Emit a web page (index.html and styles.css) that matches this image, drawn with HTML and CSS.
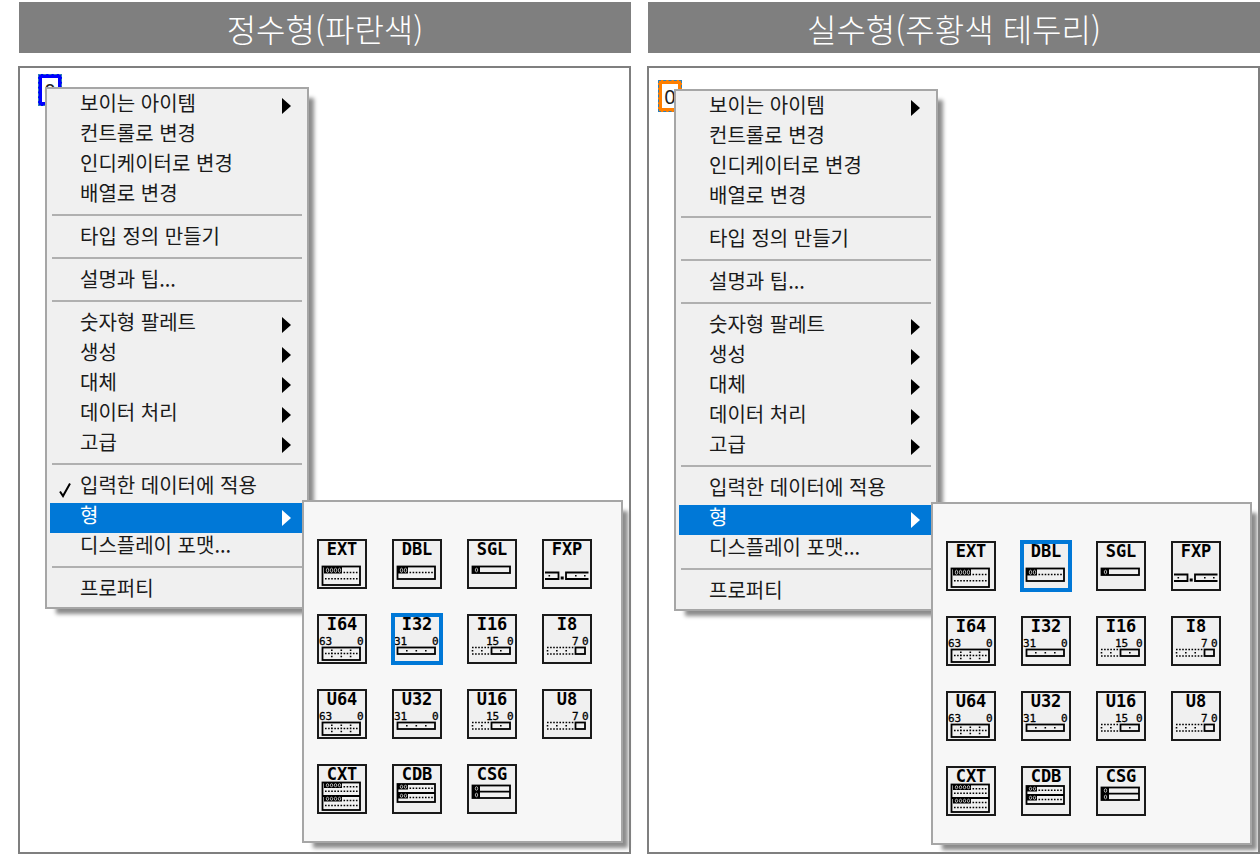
FILE: index.html
```html
<!DOCTYPE html>
<html lang="ko">
  <head>
    <meta charset="UTF-8" />
    <meta name="viewport" content="width=device-width, initial-scale=1.0" />
    <title>정수형 / 실수형</title>
    <link rel="stylesheet" href="styles.css">
  </head>
  <body>
    <section class="column">
      <h2 class="title">정수형(파란색)</h2>
      <div class="panel">
        <input class="constant integer" type="text" value="0" aria-label="정수형" />
        <ul class="menu menu-integer">
          <li><button class="item more">보이는 아이템</button></li>
          <li><button class="item">컨트롤로 변경</button></li>
          <li><button class="item">인디케이터로 변경</button></li>
          <li><button class="item">배열로 변경</button></li>
          <li class="line"></li>
          <li><button class="item">타입 정의 만들기</button></li>
          <li class="line"></li>
          <li><button class="item">설명과 팁...</button></li>
          <li class="line"></li>
          <li><button class="item more">숫자형 팔레트</button></li>
          <li><button class="item more">생성</button></li>
          <li><button class="item more">대체</button></li>
          <li><button class="item more">데이터 처리</button></li>
          <li><button class="item more">고급</button></li>
          <li class="line"></li>
          <li>
            <button class="item">
              <svg class="check" viewBox="0 0 12 16"><path d="M1 9.5 L4 14 L11 1.5" /></svg>입력한 데이터에 적용
            </button>
          </li>
          <li class="parent">
            <button class="item more active">형</button>
            <div class="palette" data-selected="I32"></div>
          </li>
          <li><button class="item">디스플레이 포맷...</button></li>
          <li class="line"></li>
          <li><button class="item">프로퍼티</button></li>
        </ul>
      </div>
    </section>

    <section class="column">
      <h2 class="title">실수형(주황색 테두리)</h2>
      <div class="panel">
        <input class="constant real" type="text" value="0" aria-label="실수형" />
        <ul class="menu menu-real">
          <li><button class="item more">보이는 아이템</button></li>
          <li><button class="item">컨트롤로 변경</button></li>
          <li><button class="item">인디케이터로 변경</button></li>
          <li><button class="item">배열로 변경</button></li>
          <li class="line"></li>
          <li><button class="item">타입 정의 만들기</button></li>
          <li class="line"></li>
          <li><button class="item">설명과 팁...</button></li>
          <li class="line"></li>
          <li><button class="item more">숫자형 팔레트</button></li>
          <li><button class="item more">생성</button></li>
          <li><button class="item more">대체</button></li>
          <li><button class="item more">데이터 처리</button></li>
          <li><button class="item more">고급</button></li>
          <li class="line"></li>
          <li><button class="item">입력한 데이터에 적용</button></li>
          <li class="parent">
            <button class="item more active">형</button>
            <div class="palette" data-selected="DBL"></div>
          </li>
          <li><button class="item">디스플레이 포맷...</button></li>
          <li class="line"></li>
          <li><button class="item">프로퍼티</button></li>
        </ul>
      </div>
    </section>

    <script>
      function box(x, y, w, h) {
        return `<rect class="box" x="${x}" y="${y}" width="${w}" height="${h}" />`;
      }

      function dots(d) {
        return `<path class="dots" d="${d}" />`;
      }

      // exponent part of a float: black block with small light rings
      function exponent(x, y, w, h, rings) {
        var out = `<rect x="${x}" y="${y}" width="${w}" height="${h}" />`;
        for (var i = 0; i < rings; i++) {
          out += `<ellipse class="ring" cx="${x + 3.5 + i * 4}" cy="${y + h / 2}" rx="1.2" ry="${h / 2 - 1.2}" />`;
        }
        return out;
      }

      function bits(hi, x) {
        return `<text class="bits" x="${x}" y="31">${hi}</text><text class="bits" x="40" y="31">0</text>`;
      }

      var int64 = bits("63", 2) + box(5.5, 33.5, 37.5, 12.5) +
        dots("M8 39.5H42M14.8 35.5V44M24.3 35.5V44M33.6 35.5V44");
      var int32 = bits("31", 2) + box(5.5, 33.5, 37.5, 6.5) +
        dots("M14 36.7h1.6M23.5 36.7h1.6M33 36.7h1.6");
      var int16 = bits("15", 19) + box(24.5, 33.5, 18.5, 6.5) +
        dots("M5 33.5H23M5 40H23M5.5 36v2M14.8 36v2M33 36.7h1.6");
      var int8 = bits("7", 30) + box(33.5, 33.5, 9.5, 6.5) +
        dots("M5 33.5H32M5 40H32M5.5 36v2M14.8 36v2M24.2 36v2");

      var types = [
        ["EXT", box(5.5, 27.5, 37.5, 18.5) + exponent(7, 28, 18, 6.5, 4) + dots("M26.5 33.5H42M8 39.7H42")],
        ["DBL", box(5.5, 27.5, 37.5, 12.5) + exponent(6, 28, 10, 6.5, 2) + dots("M17.5 33.5H42")],
        ["SGL", box(5.5, 27.5, 37.5, 6.5) + exponent(6, 28, 7, 6, 1)],
        ["FXP", '<path class="box" d="M3 33.5H16.5V40H3M46.5 33.5H24V40H46.5" /><rect x="18.7" y="37.5" width="3" height="3" />' +
          dots("M6.5 36.7h1.6M33 36.7h1.6M42 36.7h1.6")],
        ["I64", int64],
        ["I32", int32],
        ["I16", int16],
        ["I8", int8],
        ["U64", int64],
        ["U32", int32],
        ["U16", int16],
        ["U8", int8],
        ["CXT", box(5.5, 18.5, 37.5, 27.5) + '<path class="box" d="M5.5 32H43" />' +
          exponent(7, 18.5, 18, 5.5, 4) + exponent(7, 32, 18, 5.5, 4) +
          dots("M26.5 22.8H42M8 27.2H42M26.5 36.5H42M8 41.5H42")],
        ["CDB", box(5.5, 20, 37.5, 18) + '<path class="box" d="M5.5 29H43" />' +
          exponent(6, 20, 10, 5.5, 2) + exponent(6, 29, 10, 5.5, 2) + dots("M17.5 24.3H42M17.5 33.5H42")],
        ["CSG", box(5.5, 21.5, 37.5, 12.5) + '<path class="box" d="M5.5 27.7H43" />' +
          exponent(6, 21.5, 7, 6, 1) + exponent(6, 28, 7, 6, 1)]
      ];

      var palettes = document.querySelectorAll(".palette");
      for (var p = 0; p < palettes.length; p++) {
        for (var i = 0; i < types.length; i++) {
          var tile = document.createElement("button");
          tile.className = "tile";
          if (types[i][0] === palettes[p].dataset.selected) {
            tile.classList.add("selected");
          }
          tile.innerHTML = `<svg viewBox="0 0 50 50"><rect class="frame" x="1" y="1" width="48" height="48" />
            <text class="name" x="25" y="16">${types[i][0]}</text>${types[i][1]}</svg>`;
          palettes[p].appendChild(tile);
        }
      }
    </script>
  </body>
</html>
```
FILE: styles.css
```css
* {
  margin: 0;
  padding: 0;
  box-sizing: border-box;
}

body {
  display: flex;
  gap: 16px;
  min-height: 100vh;
  padding: 2px 0 0 18px;
  background: #fff;
  font-family: "Noto Sans CJK KR", sans-serif;
}

.column {
  flex: 1;
  display: flex;
  flex-direction: column;
  gap: 13px;
}

.title {
  margin-left: 1px;
  padding-top: 2px;
  background: #7f7f7f;
  color: #fff;
  font-size: 32px;
  font-weight: 300;
  line-height: 49px;
  text-align: center;
}

.panel {
  position: relative;
  flex: 1;
  border: 2px solid #7f7f7f;
}

.constant {
  position: absolute;
  width: 24px;
  height: 32px;
  border: 4px solid;
  outline: 1px dashed #2f7fb5;
  outline-offset: -1px;
  font-family: "Noto Sans", sans-serif;
  font-size: 20px;
  text-align: center;
  color: #222;
}

.integer {
  left: 18px;
  top: 6px;
  border-color: #0000ff;
}

.real {
  left: 9px;
  top: 12px;
  border-color: #ff7f00;
}

.menu {
  position: absolute;
  left: 25px;
  width: 264px;
  padding: 2px 5px 1px 3px;
  border: 2px solid #a6a6a6;
  background: #f0f0f0;
  box-shadow: 8px 8px 4px -3px #8c8c8c;
  list-style: none;
}

.menu-integer {
  top: 19px;
}

.menu-real {
  top: 21px;
}

.item {
  position: relative;
  display: block;
  width: 100%;
  height: 30px;
  padding: 0 0 6px 30px;
  border: none;
  background: none;
  color: #1a1a1a;
  font-family: inherit;
  font-size: 20px;
  line-height: 24px;
  text-align: left;
  white-space: nowrap;
}

.more::after {
  content: "";
  position: absolute;
  right: 11px;
  top: 7px;
  border-left: 9px solid #000;
  border-top: 8px solid transparent;
  border-bottom: 8px solid transparent;
}

.active {
  background: #0078d7;
  color: #fff;
}

.active::after {
  border-left-color: #fff;
}

.check {
  position: absolute;
  left: 9px;
  top: 9px;
  width: 12px;
  height: 16px;
  fill: none;
  stroke: #000;
  stroke-width: 2;
}

.line {
  height: 2px;
  margin: 3px 0 8px 2px;
  background: #b0b0b0;
}

.parent {
  position: relative;
}

.palette {
  position: absolute;
  left: 100%;
  top: -3px;
  z-index: 1;
  display: grid;
  grid-template-columns: repeat(4, 50px);
  gap: 25px;
  padding: 37px 29px 27px 13px;
  border: 2px solid #a6a6a6;
  background: #f7f7f7;
  box-shadow: 8px 8px 4px -3px #8c8c8c;
}

.tile {
  width: 50px;
  height: 50px;
  border: none;
  background: #f0f0f0;
}

.tile svg {
  display: block;
  width: 50px;
  height: 50px;
}

.selected {
  outline: 4px solid #0078d7;
  outline-offset: -3px;
}

.frame {
  fill: #f0f0f0;
  stroke: #1a1a1a;
  stroke-width: 2;
}

.name {
  font-family: "DejaVu Sans Mono", monospace;
  font-size: 17px;
  font-weight: bold;
  text-anchor: middle;
}

.bits {
  font-family: "DejaVu Sans Mono", monospace;
  font-size: 11px;
  stroke: #000;
  stroke-width: 0.3;
}

.box {
  fill: none;
  stroke: #000;
  stroke-width: 1.8;
}

.dots {
  fill: none;
  stroke: #000;
  stroke-width: 1.6;
  stroke-dasharray: 1.6 1.5;
}

.ring {
  fill: none;
  stroke: #ddd;
  stroke-width: 0.8;
}
```
